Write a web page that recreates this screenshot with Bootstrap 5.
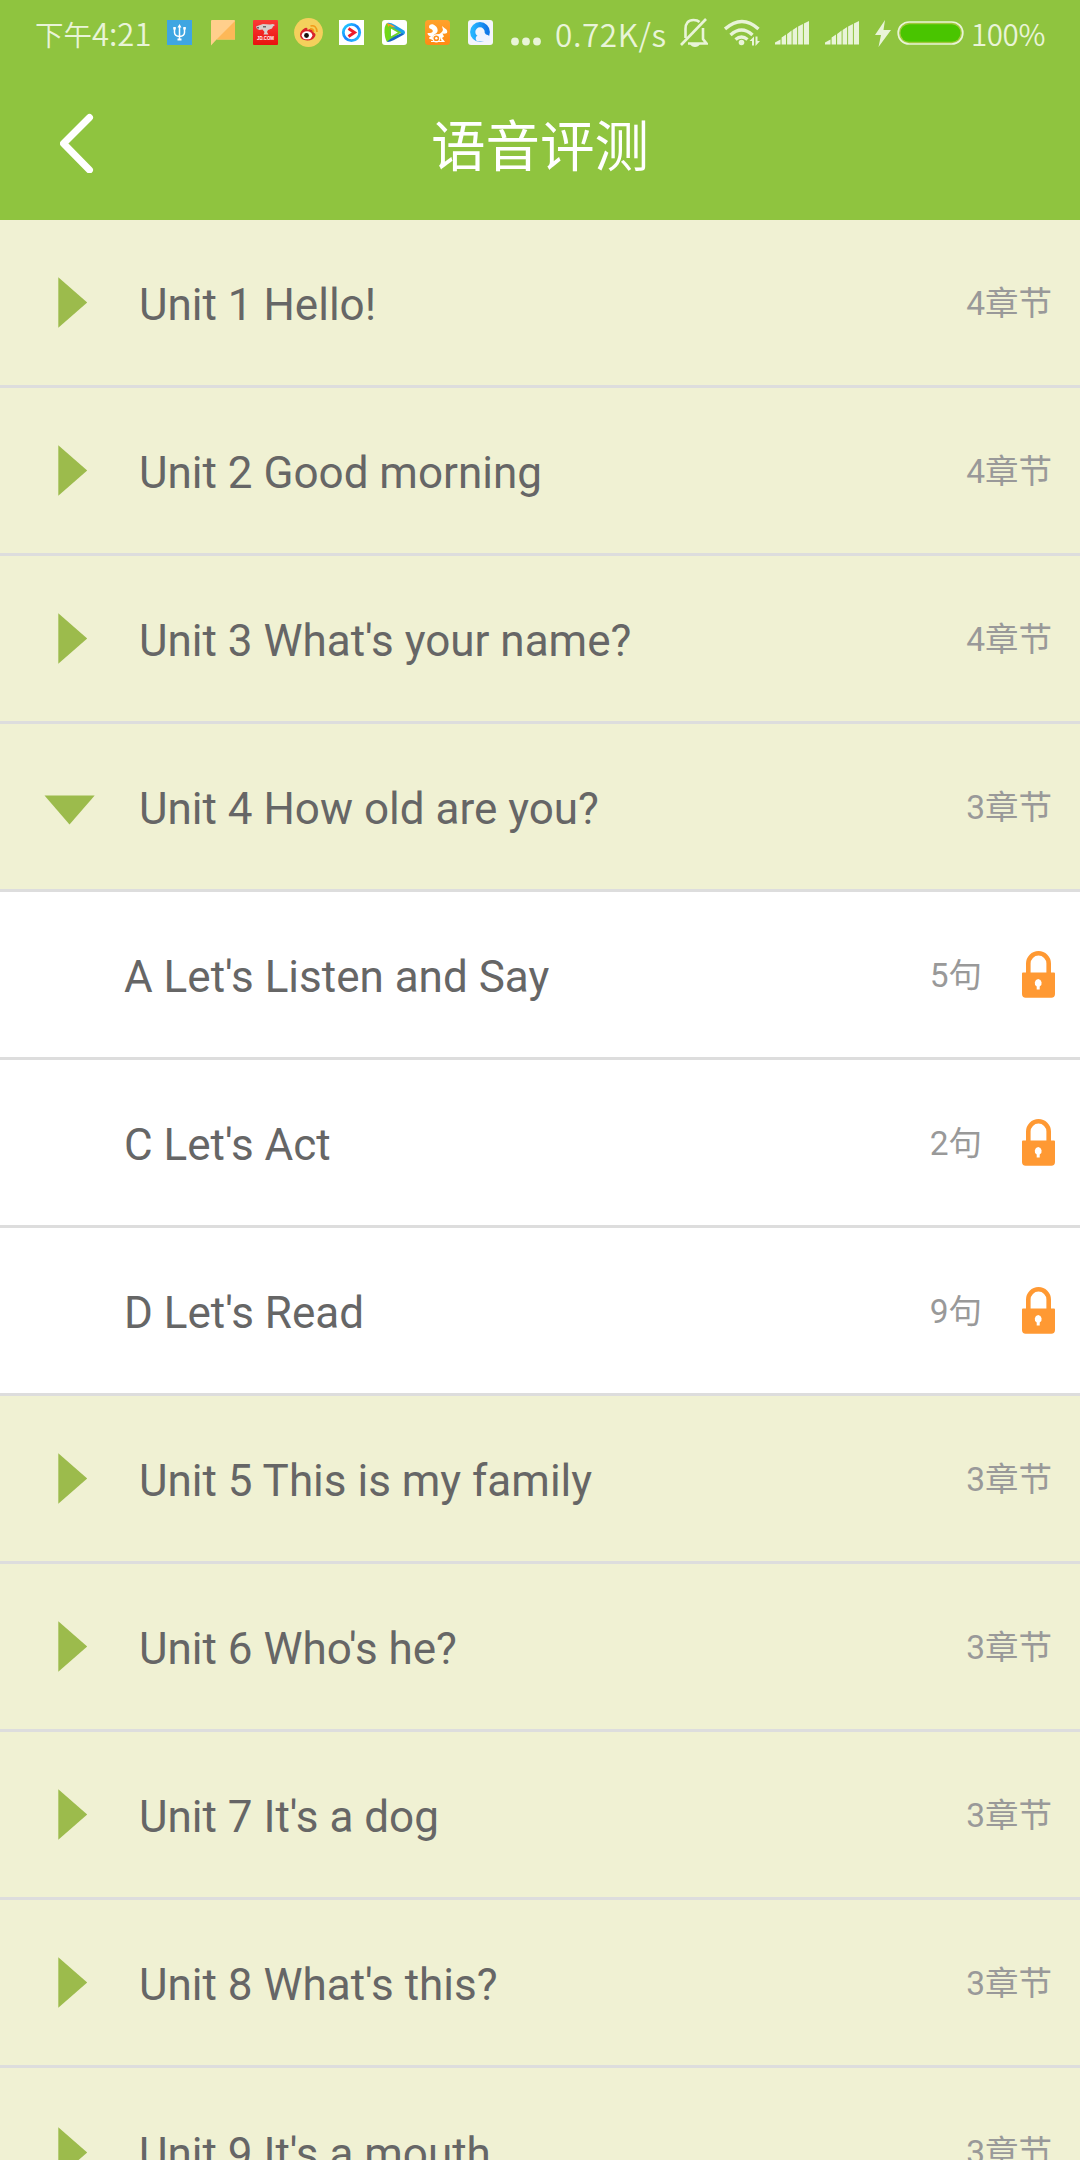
<!DOCTYPE html>
<html lang="zh-CN">
<head>
<meta charset="utf-8">
<meta name="viewport" content="width=device-width, initial-scale=1">
<title>语音评测</title>
<link href="https://cdn.jsdelivr.net/npm/bootstrap@5.3.0/dist/css/bootstrap.min.css" rel="stylesheet">
<style>
  body { width: 1080px; height: 2160px; font-family: Roboto, "Noto Sans CJK SC", sans-serif; background: #f0f1d3; }
  .app-top { height: 220px; background: #8fc43f; }
  .status-line { height: 66px; padding-left: 35px; color: #e9f4d8; font-size: 31px; line-height: 66px; }
  .status-line svg { display: block; flex: none; }
  .st-time { width: 123px; font-family: "Noto Sans CJK SC", sans-serif; font-weight: 350; font-size: 28.5px; }
  .st-time b { font: inherit; font-size: 31px; }
  .st-app { width: 43px; height: 30px; }
  .st-dots { margin-left: 8px; width: 32px; }
  .st-speed { margin-left: 13px; width: 125px; font-family: "Noto Sans CJK SC", sans-serif; font-weight: 350; font-size: 31.5px; letter-spacing: .6px; }
  .st-pct { margin-left: 7px; font-family: "Noto Sans CJK SC", sans-serif; font-weight: 350; font-size: 29.5px; letter-spacing: -.4px; }
  .title-line { height: 154px; padding: 0 60px; }
  .title-side { width: 34px; }
  .title-text { font-size: 54.5px; line-height: 80px; font-weight: 400; padding-top: 8px; }
  .unit-list > .unit-row { height: 168px; border: 0; border-bottom: 3px solid #dddddd; border-radius: 0; background: #f0f1d3; color: #666; padding: 0 28px 0 0; }
  .unit-list > .lesson { background: #fff; padding: 0 25px 0 124px; }
  .row-label { font-size: 44px; line-height: 60px; padding-top: 4px; }
  .row-count { font-size: 33.5px; line-height: 48px; color: #999; padding-top: 2px; }
  .row-arrow { width: 139px; flex: none; }
  .row-lock { margin-left: 40px; }
</style>
<script src="https://cdn.jsdelivr.net/npm/bootstrap@5.3.0/dist/js/bootstrap.bundle.min.js"></script>
</head>
<body class="overflow-hidden">
<svg width="0" height="0" class="position-absolute" aria-hidden="true">
  <defs>
    <linearGradient id="gJd" x2="0" y2="1"><stop stop-color="#fb3a37"/><stop offset="1" stop-color="#e8120e"/></linearGradient>
    <linearGradient id="gUc" x2="0" y2="1"><stop stop-color="#ffa22c"/><stop offset="1" stop-color="#ff8a14"/></linearGradient>
    <linearGradient id="gQq" x2="1" y2="0"><stop stop-color="#27b4ff"/><stop offset="1" stop-color="#1277e8"/></linearGradient>
    <linearGradient id="gYk" x2="1" y2="1"><stop stop-color="#25d5ff"/><stop offset=".5" stop-color="#1683ff"/><stop offset="1" stop-color="#28c6ff"/></linearGradient>
    <symbol id="right" viewBox="0 0 139 165"><path d="M58.300 57.300L87.200 82.500L58.300 107.700Z" fill="#9cbb4c"/></symbol>
    <symbol id="down" viewBox="0 0 139 165"><path d="M44.500 71.600H94.700L69.500 100.400Z" fill="#9cbb4c"/></symbol>
    <symbol id="lock" viewBox="0 0 33 47"><path d="M6.300 24V12.500a10.200 10.200 0 0 1 20.400 0V24" fill="none" stroke="#ff9933" stroke-width="4.600"/><path fill-rule="evenodd" d="M1 21.500h31a1 1 0 0 1 1 1V43a3.700 3.700 0 0 1-3.700 3.700H3.700A3.700 3.700 0 0 1 0 43V22.500a1 1 0 0 1 1-1zM16.200 28a4 4 0 0 0-1.500 7.400V38.500h3V35.400A4 4 0 0 0 16.200 28z" fill="#ff9933"/></symbol>
    <symbol id="bars" viewBox="0 0 34 24"><path d="M0 23.500V21.500L5.500 18.500V23.500zM6.600 23.500V16.500L11 13.500V23.500zM12.100 23.500V13L16.600 9.500V23.500zM17.600 23.500V9L22.100 6V23.500zM23.100 23.500V5.500L27.900 3V23.500zM28.900 23.500V2.500L34 0V23.500z" fill="#e9f4d8"/></symbol>
  </defs>
</svg>

<header class="app-top">
  <div class="status-line d-flex align-items-center text-nowrap">
    <span class="st-time">下午<b>4:21</b></span>
    <svg class="st-app" viewBox="0 0 43 30"><path fill="#3fa6e2" d="M9 2h25v25H9z"/><path d="M21.500 8v14M16.500 9.500v5q0 3.500 5 4 5-.5 5-4v-5" fill="none" stroke="#fff" stroke-width="1.500"/><path d="M21.500 6l2 3.500h-4zM15.300 9h2.500v2.500h-2.500zM25.300 9h2.500v2.500h-2.500zM19.500 20.500h4v2h-4z" fill="#fff"/></svg>
    <svg class="st-app" viewBox="0 0 43 30"><path d="M11 2h22q1 0 1 1v18.500H15.500L10 27.500V3q0-1 1-1z" fill="#ffcf8c"/><path d="M34 3v18.500H15.500z" fill="#fdb858"/></svg>
    <svg class="st-app" viewBox="0 0 43 30"><rect x="9" y="2" width="25" height="25" rx="1" fill="url(#gJd)"/><path d="M12 8.500l4-1.500 3-1 7 .5 3-.5 2 1-2 1.500-1 2-4 1.500-1 2 1.500 2.500h-5l1-2.500-2-2.500-3 .5-2.500-1z" fill="#d8d0ce"/><path d="M13 9h2v1.500h-2zM19 8h3v1.500h-3z" fill="#6d6668"/><text x="21.500" y="22.300" text-anchor="middle" textLength="17" lengthAdjust="spacingAndGlyphs" font-family="Liberation Sans" font-weight="700" font-size="5.500" fill="#fff">JD.COM</text></svg>
    <svg class="st-app" viewBox="0 0 43 30"><circle cx="21.500" cy="14.500" r="14.400" fill="#f4d05c"/><path d="M13 17q0-4 5-7 3-1 2.500 2 4-2 6 0 .5 1 0 2.500 3 1 1.500 4-2 4-7.500 4Q13 22 13 17z" fill="#d9232a"/><ellipse cx="20" cy="17.300" rx="5.300" ry="4" fill="#fff"/><circle cx="19.500" cy="17.500" r="2.400" fill="#16100e"/><path d="M23.500 8q6-1.500 6.500 6M23 11q3.500-.5 3.500 3" fill="none" stroke="#f39a19" stroke-width="1.700"/></svg>
    <svg class="st-app" viewBox="0 0 43 30"><path fill="#fff" d="M9 2h25v25H9z"/><circle cx="21.500" cy="14.500" r="8.200" fill="none" stroke="url(#gYk)" stroke-width="2.800"/><path d="M18.500 10.500l6 4-6 4" fill="none" stroke="#f01e2c" stroke-width="3"/></svg>
    <svg class="st-app" viewBox="0 0 43 30"><rect x="9" y="2" width="25" height="25" rx="3" fill="#fff"/><path d="M14 5q-3 3-2.500 9.500T14 24L21 20V9z" fill="#71d717"/><path d="M14 5q3-1 8 2l9 5.500q2 2 0 4L23 14z" fill="#1ba1e8"/><path d="M31 16.500L21 22q-5 2.500-7 2l5-5 10-4z" fill="#1667c4"/><path d="M14 5q5 1 9 4.500l-8-1z" fill="#ff9a22"/><path d="M17 9L26.500 14.500 17 20z" fill="#fff" stroke="#6bd229" stroke-width="2"/></svg>
    <svg class="st-app" viewBox="0 0 43 30"><rect x="9" y="2" width="25" height="25" rx="3.500" fill="url(#gUc)"/><path d="M18 22.500C15 19 17 17 20 15.500 22.500 14 22 10 19.500 8 16.500 5 13 6.500 13 9c0 1.500 1.500 1.500 3 2.500 2 2 0 4-4.500 3.500 0 2 2 3.500 4 3.500-2 0-2.500 1-2.500 2z" fill="#fff"/><path d="M20 16q5 1 7-4l-1-4 3 2.500q3 1.500 2 4.500-2 1-4.500.5l1.500 3-2 1.500 3 4h-3l-2-5q-3-2-4-3z" fill="#fff"/><circle cx="20.300" cy="20.300" r="3.500" fill="none" stroke="#fff" stroke-width="1.300"/><circle cx="20.300" cy="20.300" r="1.200" fill="#fff"/><path d="M15 23.500h12" stroke="#fff"/></svg>
    <svg class="st-app" viewBox="0 0 43 30"><rect x="9" y="2" width="25" height="25" rx="3" fill="#f4f5fb"/><circle cx="21" cy="14" r="7.300" fill="none" stroke="url(#gQq)" stroke-width="5.200"/><path d="M20 23.500a3 3 0 0 1-.5-6 4 4 0 0 1 7.500-1Q31 17 31 20t-3.500 3.500z" fill="#f0f3ff"/></svg>
    <svg class="st-dots" width="32" height="30" viewBox="0 0 32 30"><g fill="#e9f4d8"><circle cx="5" cy="23.500" r="3.900"/><circle cx="16" cy="23.500" r="3.900"/><circle cx="27" cy="23.500" r="3.900"/></g></svg>
    <span class="st-speed">0.72K/s</span>
    <svg width="28" height="30" viewBox="0 0 28 30"><g fill="none" stroke="#e9f4d8" stroke-width="2.600"><path d="M5.500 20V11q0-9 8-9 4 0 6 2M23 10v11l3.500 4.500H8"/><path d="M1 27L26 1"/></g><path d="M10 26h10q-1.500 3-5 3T10 26z" fill="#e9f4d8"/></svg>
    <svg class="ms-3" width="36" height="30" viewBox="0 0 36 30"><g fill="none" stroke="#e9f4d8" stroke-width="3.400"><path d="M1 11q17-15 33.500 0"/><path d="M6.500 17q11-10 22 0"/><path d="M11.500 21.500q6-5 12 0"/></g><circle cx="17.500" cy="24.500" r="2.800" fill="#e9f4d8"/><path d="M30 18.500v9h-2v-4.500H25.500zM31.500 28v-9.500h2V23H36z" fill="#e9f4d8"/></svg>
    <svg style="margin-left:15px" width="34" height="24"><use href="#bars"/></svg>
    <svg class="ms-3" width="34" height="24"><use href="#bars"/></svg>
    <svg class="ms-3" width="16" height="28" viewBox="0 0 16 28"><path d="M10 1L0 16h6L3.500 28 16 11H8.500z" fill="#e9f4d8"/></svg>
    <svg style="margin-left:6px" width="67" height="26" viewBox="0 0 67 26"><rect x="1.200" y="2" width="64.600" height="22" rx="11" fill="#9fc93a" stroke="#e9f4d8" stroke-width="1.700"/><rect x="3.500" y="4.200" width="60" height="17.600" rx="8.800" fill="#49c500"/></svg>
    <span class="st-pct">100%</span>
  </div>
  <div class="title-line d-flex align-items-center justify-content-between">
    <svg class="title-side" height="60" viewBox="0 0 34 60"><path d="M29.500 4.500L3.500 30.500L29.500 57" fill="none" stroke="#fff" stroke-width="7" stroke-linecap="round" stroke-linejoin="round"/></svg>
    <h1 class="title-text text-white m-0">语音评测</h1>
    <span class="title-side"></span>
  </div>
</header>

<main class="list-group list-group-flush unit-list">
  <div class="list-group-item unit-row d-flex align-items-center"><svg class="row-arrow" height="165"><use href="#right"/></svg><span class="row-label flex-grow-1">Unit 1 Hello!</span><span class="row-count">4章节</span></div>
  <div class="list-group-item unit-row d-flex align-items-center"><svg class="row-arrow" height="165"><use href="#right"/></svg><span class="row-label flex-grow-1">Unit 2 Good morning</span><span class="row-count">4章节</span></div>
  <div class="list-group-item unit-row d-flex align-items-center"><svg class="row-arrow" height="165"><use href="#right"/></svg><span class="row-label flex-grow-1">Unit 3 What's your name?</span><span class="row-count">4章节</span></div>
  <div class="list-group-item unit-row d-flex align-items-center"><svg class="row-arrow" height="165"><use href="#down"/></svg><span class="row-label flex-grow-1">Unit 4 How old are you?</span><span class="row-count">3章节</span></div>
  <div class="list-group-item unit-row lesson d-flex align-items-center"><span class="row-label flex-grow-1">A Let's Listen and Say</span><span class="row-count">5句</span><svg class="row-lock" width="33" height="47"><use href="#lock"/></svg></div>
  <div class="list-group-item unit-row lesson d-flex align-items-center"><span class="row-label flex-grow-1">C Let's Act</span><span class="row-count">2句</span><svg class="row-lock" width="33" height="47"><use href="#lock"/></svg></div>
  <div class="list-group-item unit-row lesson d-flex align-items-center"><span class="row-label flex-grow-1">D Let's Read</span><span class="row-count">9句</span><svg class="row-lock" width="33" height="47"><use href="#lock"/></svg></div>
  <div class="list-group-item unit-row d-flex align-items-center"><svg class="row-arrow" height="165"><use href="#right"/></svg><span class="row-label flex-grow-1">Unit 5 This is my family</span><span class="row-count">3章节</span></div>
  <div class="list-group-item unit-row d-flex align-items-center"><svg class="row-arrow" height="165"><use href="#right"/></svg><span class="row-label flex-grow-1">Unit 6 Who's he?</span><span class="row-count">3章节</span></div>
  <div class="list-group-item unit-row d-flex align-items-center"><svg class="row-arrow" height="165"><use href="#right"/></svg><span class="row-label flex-grow-1">Unit 7 It's a dog</span><span class="row-count">3章节</span></div>
  <div class="list-group-item unit-row d-flex align-items-center"><svg class="row-arrow" height="165"><use href="#right"/></svg><span class="row-label flex-grow-1">Unit 8 What's this?</span><span class="row-count">3章节</span></div>
  <div class="list-group-item unit-row d-flex align-items-center"><svg class="row-arrow" height="165"><use href="#right"/></svg><span class="row-label flex-grow-1">Unit 9 It's a mouth</span><span class="row-count">3章节</span></div>
</main>
</body>
</html>
